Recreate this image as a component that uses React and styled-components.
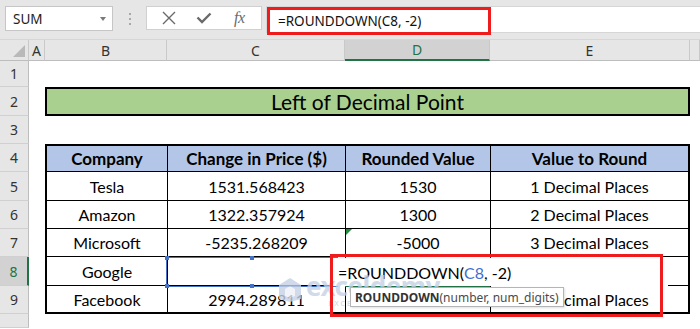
import React from "react";
import styled, { createGlobalStyle } from "styled-components";

const GlobalStyle = createGlobalStyle`
  html, body {
    margin: 0;
    padding: 0;
    background: #ffffff;
    overflow: hidden;
  }
  * {
    box-sizing: border-box;
  }
`;

const COLS = "29px 16px 122px 178px 145px 200px 1fr";
const UI_FONT = `"Noto Sans", "Open Sans", sans-serif`;
const CELL_FONT = `Lato, "Liberation Sans", sans-serif`;

const Page = styled.div`
  width: 700px;
  height: 329px;
  overflow: hidden;
  background: #fff;
`;

const FormulaBar = styled.div`
  height: 40px;
  background: #e6e6e6;
  display: flex;
  align-items: flex-start;
  padding-top: 6px;
  padding-left: 5px;
  border-bottom: 1px solid #d6d6d6;
`;

const NameBox = styled.div`
  width: 108px;
  height: 25px;
  background: #fff;
  border: 1px solid #c6c6c6;
  display: flex;
  align-items: center;
  justify-content: space-between;
  padding: 0 6px 0 7px;
  font-family: ${UI_FONT};
  font-size: 13.5px;
  color: #222;
`;

const Caret = styled.span`
  width: 0;
  height: 0;
  border-left: 3.5px solid transparent;
  border-right: 3.5px solid transparent;
  border-top: 4px solid #7a7a7a;
  margin-top: 1px;
`;

const Grip = styled.div`
  width: 33px;
  height: 25px;
  display: flex;
  flex-direction: column;
  align-items: center;
  justify-content: center;
  gap: 3px;
  span {
    width: 2px;
    height: 2px;
    background: #a8a8a8;
  }
`;

const ButtonBox = styled.div`
  width: 116px;
  height: 24px;
  background: #fff;
  border: 1px solid #d0d0d0;
  display: flex;
  align-items: center;
  justify-content: space-around;
  padding: 0 4px;
`;

const IconButton = styled.span`
  width: 30px;
  display: flex;
  align-items: center;
  justify-content: center;
  color: #6a6a6a;
`;

const FxLabel = styled.span`
  font-family: "Liberation Serif", serif;
  font-style: italic;
  font-size: 16px;
  color: #6a6a6a;
  letter-spacing: -0.5px;
`;

const FormulaInput = styled.div`
  flex: 1;
  height: 27px;
  margin-left: 4px;
  background: #fff;
  border: 1px solid #d6d6d6;
  border-right: none;
  position: relative;
`;

const RedFrame = styled.div`
  position: absolute;
  left: 0;
  top: 0;
  width: 224px;
  height: 28px;
  border: 3px solid #ee1c1c;
  padding-left: 8px;
  display: flex;
  align-items: center;
  font-family: ${UI_FONT};
  font-size: 13.5px;
  color: #111;
`;

const Sheet = styled.div`
  position: relative;
`;

const Row = styled.div`
  display: grid;
  grid-template-columns: ${COLS};
  height: ${(p) => p.$h}px;
`;

const Corner = styled.div`
  background: #e6e6e6;
  border-right: 1px solid #c9c9c9;
  border-bottom: 1px solid #bdbdbd;
  position: relative;
  &::after {
    content: "";
    position: absolute;
    right: 3px;
    bottom: 3px;
    width: 0;
    height: 0;
    border-left: 12px solid transparent;
    border-bottom: 12px solid #b9b9b9;
  }
`;

const ColHead = styled.div`
  background: ${(p) => (p.$active ? "#d2d2d2" : "#e6e6e6")};
  border-right: 1px solid #c9c9c9;
  border-bottom: ${(p) => (p.$active ? "2px solid #217346" : "1px solid #bdbdbd")};
  display: flex;
  align-items: center;
  justify-content: center;
  font-family: ${UI_FONT};
  font-size: 14px;
  color: ${(p) => (p.$active ? "#217346" : "#333")};
`;

const RowHead = styled.div`
  background: ${(p) => (p.$active ? "#d2d2d2" : "#e6e6e6")};
  border-right: ${(p) => (p.$active ? "2px solid #217346" : "1px solid #bdbdbd")};
  border-bottom: 1px solid #d0d0d0;
  display: flex;
  align-items: center;
  justify-content: center;
  font-family: ${UI_FONT};
  font-size: 14px;
  color: ${(p) => (p.$active ? "#217346" : "#333")};
`;

const Empty = styled.div``;

const TitleCell = styled.div`
  grid-column: 3 / 7;
  background: #a9d08e;
  border: 2px solid #000;
  display: flex;
  align-items: center;
  justify-content: center;
  font-family: ${CELL_FONT};
  font-size: 21px;
  color: #000;
`;

const Cell = styled.div`
  background: ${(p) => (p.$head ? "#b4c6e7" : "#fff")};
  border-left: ${(p) => (p.$first ? 2 : 1)}px solid #000;
  border-right: ${(p) => (p.$last ? 2 : 0)}px solid #000;
  border-top: ${(p) => (p.$head ? 2 : 0)}px solid #000;
  border-bottom: ${(p) => (p.$end ? 2 : 1)}px solid #000;
  display: flex;
  align-items: center;
  justify-content: center;
  font-family: ${CELL_FONT};
  font-weight: ${(p) => (p.$head ? 700 : 400)};
  font-size: ${(p) => (p.$head ? 17 : 16)}px;
  color: #000;
  position: relative;
`;

const ErrorMark = styled.span`
  position: absolute;
  left: 0;
  top: 0;
  width: 0;
  height: 0;
  border-top: 6px solid #1e8f3c;
  border-right: 6px solid transparent;
`;

/* overlays, coordinates relative to the sheet (page y - 41) */
const RefBox = styled.div`
  position: absolute;
  left: 166px;
  top: 217px;
  width: 172px;
  height: 30px;
  border: 1.5px solid #4472c4;
`;

const Handle = styled.span`
  position: absolute;
  width: 4px;
  height: 4px;
  background: #4472c4;
  left: ${(p) => p.$x};
  top: ${(p) => p.$y};
  transform: translate(-50%, -50%);
`;

const EditBox = styled.div`
  position: absolute;
  left: 333px;
  top: 218px;
  width: 335px;
  height: 28px;
  background: #fff;
  display: flex;
  align-items: center;
  padding-left: 5px;
  font-family: ${CELL_FONT};
  font-size: 16px;
  color: #000;
  &::after {
    content: "";
    position: absolute;
    left: 12px;
    right: 178px;
    bottom: -1px;
    height: 1.5px;
    background: #217346;
  }
`;

const RefText = styled.span`
  color: #3f6fd0;
`;

const Tooltip = styled.div`
  position: absolute;
  left: 350px;
  top: 247px;
  height: 20px;
  padding: 0 4px;
  background: #fff;
  border: 1px solid #b5b5b5;
  box-shadow: 1px 1px 2px rgba(0, 0, 0, 0.12);
  display: flex;
  align-items: center;
  font-family: ${UI_FONT};
  font-size: 12px;
  color: #4a4a4a;
  white-space: nowrap;
  b {
    font-weight: 700;
    color: #333;
  }
`;

const Annotation = styled.div`
  position: absolute;
  left: 330px;
  top: 214px;
  width: 333px;
  height: 63px;
  border: 3px solid #ee1c1c;
  pointer-events: none;
`;

const Watermark = styled.div`
  position: absolute;
  left: 278px;
  top: 233px;
  display: flex;
  align-items: center;
  gap: 4px;
  opacity: 0.8;
  pointer-events: none;
`;

const MarkWord = styled.div`
  display: flex;
  flex-direction: column;
  align-items: center;
  line-height: 1;
  font-family: ${UI_FONT};
  span:first-child {
    font-size: 26px;
    font-weight: 700;
    color: #c5d1e6;
    letter-spacing: -0.5px;
  }
  span:last-child {
    font-size: 7px;
    letter-spacing: 2px;
    color: #c3c9d2;
    margin-top: 1px;
  }
`;

const rowHeights = [27, 29, 28, 28, 29, 28, 28, 29, 28, 14];

const data = [
  ["Tesla", "1531.568423", "1530", "1 Decimal Places"],
  ["Amazon", "1322.357924", "1300", "2 Decimal Places"],
  ["Microsoft", "-5235.268209", "-5000", "3 Decimal Places"],
  ["Google", "", "", "4 Decimal Places"],
  ["Facebook", "2994.289811", "", "5 Decimal Places"],
];

const TableRow = ({ cells, head, end, mark }) => (
  <>
    <Empty />
    {cells.map((c, i) => (
      <Cell
        key={i}
        $head={head}
        $end={end}
        $first={i === 0}
        $last={i === cells.length - 1}
      >
        {mark && i === 2 && <ErrorMark />}
        {c}
      </Cell>
    ))}
    <Empty />
  </>
);

export default function App() {
  return (
    <Page>
      <GlobalStyle />
      <FormulaBar>
        <NameBox>
          SUM
          <Caret />
        </NameBox>
        <Grip>
          <span />
          <span />
          <span />
        </Grip>
        <ButtonBox>
          <IconButton>
            <svg width="14" height="14" viewBox="0 0 14 14">
              <path d="M1 1L13 13M13 1L1 13" stroke="currentColor" strokeWidth="1.4" fill="none" />
            </svg>
          </IconButton>
          <IconButton>
            <svg width="16" height="12" viewBox="0 0 16 12">
              <path d="M1.5 5.5L6 10L14.5 1.5" stroke="currentColor" strokeWidth="2.4" fill="none" />
            </svg>
          </IconButton>
          <IconButton>
            <FxLabel>fx</FxLabel>
          </IconButton>
        </ButtonBox>
        <FormulaInput>
          <RedFrame>=ROUNDDOWN(C8, -2)</RedFrame>
        </FormulaInput>
      </FormulaBar>

      <Sheet>
        <Row $h={20}>
          <Corner />
          <ColHead>A</ColHead>
          <ColHead>B</ColHead>
          <ColHead>C</ColHead>
          <ColHead $active>D</ColHead>
          <ColHead>E</ColHead>
          <ColHead />
        </Row>
        {rowHeights.map((h, idx) => {
          const n = idx + 1;
          let body = (
            <>
              <Empty />
              <Empty />
              <Empty />
              <Empty />
              <Empty />
              <Empty />
            </>
          );
          if (n === 2) {
            body = (
              <>
                <Empty />
                <TitleCell>Left of Decimal Point</TitleCell>
                <Empty />
              </>
            );
          } else if (n === 4) {
            body = (
              <TableRow
                head
                cells={["Company", "Change in Price ($)", "Rounded Value", "Value to Round"]}
              />
            );
          } else if (n >= 5 && n <= 9) {
            body = <TableRow cells={data[n - 5]} end={n === 9} mark={n === 7} />;
          }
          return (
            <Row key={n} $h={h}>
              <RowHead $active={n === 8}>{n <= 9 ? n : ""}</RowHead>
              {body}
            </Row>
          );
        })}

        <RefBox>
          <Handle $x="0" $y="0" />
          <Handle $x="50%" $y="0" />
          <Handle $x="0" $y="100%" />
          <Handle $x="50%" $y="100%" />
        </RefBox>
        <EditBox>
          =ROUNDDOWN(<RefText>C8</RefText>, -2)
        </EditBox>
        <Watermark>
          <svg width="24" height="26" viewBox="0 0 24 26">
            <path d="M12 1L23 8V22L12 25L1 22V8Z" fill="#c5d1e6" />
            <path d="M7 12L12 9L17 12V19L12 21L7 19Z" fill="#fff" opacity="0.7" />
          </svg>
          <MarkWord>
            <span>exceldemy</span>
            <span>EXCEL · DATA · BI</span>
          </MarkWord>
        </Watermark>
        <Tooltip>
          <b>ROUNDDOWN</b>(number, num_digits)
        </Tooltip>
        <Annotation />
      </Sheet>
    </Page>
  );
}
